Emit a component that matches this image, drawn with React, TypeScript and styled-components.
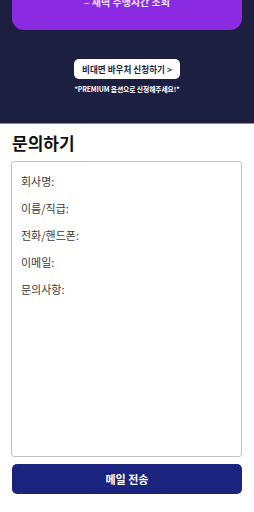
import React from "react";
import styled, { createGlobalStyle } from "styled-components";

const Global = createGlobalStyle`
  html, body { margin: 0; padding: 0; background: #fff; }
  body { font-family: Roboto, "Noto Sans CJK KR", sans-serif; }
  * { box-sizing: border-box; }
`;

const Hero = styled.section`
  background: #1d1f41;
  height: 124px;
  padding: 0 12px;
  display: flex;
  flex-direction: column;
  align-items: center;
  border-bottom: 1px solid #8a8c9a;
`;

const PurpleCard = styled.div`
  width: 100%;
  height: 30px;
  background: #8a2be2;
  border-radius: 0 0 12px 12px;
  display: flex;
  justify-content: center;
  align-items: flex-start;
  overflow: hidden;
`;

const CardText = styled.span`
  color: #f1e6ff;
  font-family: "Noto Sans CJK KR", sans-serif;
  font-weight: 700;
  font-size: 10px;
  line-height: 10px;
  margin-top: -3px;
`;

const VoucherButton = styled.button`
  margin-top: 29px;
  width: 106px;
  height: 20px;
  border: none;
  border-radius: 5px;
  background: #fff;
  color: #1d1f41;
  font-family: "Noto Sans CJK KR", sans-serif;
  font-weight: 700;
  font-size: 8.6px;
  padding: 0;
  display: flex;
  align-items: center;
  justify-content: center;
`;

const Note = styled.p`
  margin: 5px 0 0;
  color: #fff;
  font-family: "Noto Sans CJK KR", sans-serif;
  font-weight: 700;
  font-size: 6.8px;
  letter-spacing: -0.1px;
`;

const Contact = styled.section`
  padding: 7px 12px 0 11px;
`;

const Title = styled.h2`
  margin: 0 0 0 1px;
  font-family: "Noto Sans CJK KR", sans-serif;
  font-size: 17px;
  font-weight: 700;
  line-height: 24px;
  color: #111;
`;

const Box = styled.div`
  margin-top: 6px;
  height: 296px;
  border: 1px solid #c4c4c4;
  border-radius: 3px;
  padding: 11px 9px;
  display: flex;
  flex-direction: column;
  gap: 11px;
`;

const Field = styled.div`
  font-family: "Noto Sans CJK KR", sans-serif;
  font-size: 11px;
  line-height: 16px;
  color: #3a3a3a;
`;

const Send = styled.button`
  margin: 7px 0 0 1px;
  width: 230px;
  height: 30px;
  border: none;
  border-radius: 5px;
  background: #1a237e;
  color: #fff;
  font-family: "Noto Sans CJK KR", sans-serif;
  font-weight: 700;
  font-size: 11px;
  display: flex;
  align-items: center;
  justify-content: center;
`;

const fields = ["회사명:", "이름/직급:", "전화/핸드폰:", "이메일:", "문의사항:"];

export default function App() {
  return (
    <>
      <Global />
      <Hero>
        <PurpleCard>
          <CardText>– 새벽 주행시간 조회</CardText>
        </PurpleCard>
        <VoucherButton>비대면 바우처 신청하기 &gt;</VoucherButton>
        <Note>*PREMIUM 옵션으로 신청해주세요!*</Note>
      </Hero>
      <Contact>
        <Title>문의하기</Title>
        <Box>
          {fields.map((f) => (
            <Field key={f}>{f}</Field>
          ))}
        </Box>
        <Send>메일 전송</Send>
      </Contact>
    </>
  );
}
